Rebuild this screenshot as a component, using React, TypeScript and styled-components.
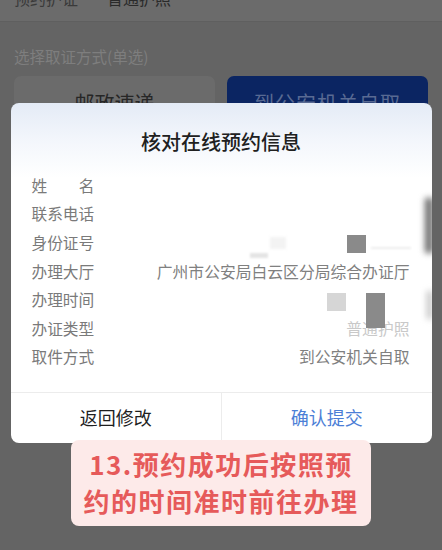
import React from "react";
import styled, { createGlobalStyle } from "styled-components";

const Global = createGlobalStyle`
  html, body { margin: 0; padding: 0; }
  body {
    width: 442px;
    height: 550px;
    overflow: hidden;
    background: #646464;
    font-family: "Noto Sans CJK SC", "Noto Sans", sans-serif;
  }
`;

const Page = styled.div`
  position: relative;
  width: 442px;
  height: 550px;
  display: flex;
  flex-direction: column;
  background: #646464;
`;

const TopBar = styled.div`
  height: 22px;
  box-sizing: border-box;
  display: flex;
  align-items: flex-end;
  gap: 29px;
  padding: 0 14px 15px;
  background: #6b6b6b;
  border-bottom: 1px solid #5f5f5f;
  overflow: hidden;
`;

const TopText = styled.span<{ $strong?: boolean }>`
  font-size: 16px;
  line-height: 16px;
  color: ${(p) => (p.$strong ? "#2a2a2a" : "#3a3a3a")};
  white-space: nowrap;
`;

const SectionLabel = styled.div`
  margin: 23px 0 0 14px;
  font-size: 15.5px;
  line-height: 22px;
  color: #7e7e7e;
`;

const ChoiceRow = styled.div`
  display: grid;
  grid-template-columns: 1fr 1fr;
  gap: 12px;
  padding: 0 14px;
  margin-top: 9px;
`;

const Choice = styled.div<{ $active?: boolean }>`
  height: 56px;
  border-radius: 7px;
  background: ${(p) => (p.$active ? "#0b2562" : "#6b6b6b")};
  color: ${(p) => (p.$active ? "#596a93" : "#262626")};
  font-size: 20px;
  display: flex;
  align-items: center;
  justify-content: center;
  padding-bottom: 4px;
  box-sizing: border-box;
  letter-spacing: ${(p) => (p.$active ? "1px" : "0")};
`;

const ModalLayer = styled.div`
  position: absolute;
  inset: 0;
  display: flex;
  flex-direction: column;
  align-items: center;
  padding-top: 103px;
`;

const Dialog = styled.div`
  position: relative;
  width: 421px;
  height: 340px;
  border-radius: 8px;
  background: linear-gradient(180deg, #e4ebf6 0px, #f4f7fc 40px, #ffffff 75px);
  display: flex;
  flex-direction: column;
  overflow: hidden;
`;

const Title = styled.div`
  height: 68px;
  box-sizing: border-box;
  padding-top: 27px;
  text-align: center;
  font-size: 20px;
  line-height: 24px;
  font-weight: 500;
  color: #202020;
`;

const Rows = styled.div`
  display: flex;
  flex-direction: column;
  padding: 0 22px 0 21px;
  height: 221px;
  border-bottom: 1px solid #ececec;
`;

const Row = styled.div`
  height: 28.6px;
  display: flex;
  align-items: center;
  justify-content: space-between;
`;

const Label = styled.div`
  width: 63px;
  display: flex;
  justify-content: space-between;
  font-size: 15.7px;
  color: #7a7a7a;
  white-space: nowrap;
`;

const Value = styled.div<{ $faint?: boolean }>`
  font-size: 15.8px;
  color: ${(p) => (p.$faint ? "#c9c9c9" : "#808080")};
  white-space: nowrap;
  text-align: right;
`;

const Footer = styled.div`
  flex: 1;
  display: grid;
  grid-template-columns: 1fr 1fr;
`;

const FootButton = styled.div<{ $primary?: boolean }>`
  display: flex;
  align-items: center;
  justify-content: center;
  padding-bottom: 2px;
  font-size: 18px;
  color: ${(p) => (p.$primary ? "#4c7ed6" : "#1f1f1f")};
  & + & {
    border-left: 1px solid #ececec;
  }
`;

const Blot = styled.div<{ $shade: string; $blur?: number }>`
  position: absolute;
  background: ${(p) => p.$shade};
  filter: blur(${(p) => p.$blur ?? 0.6}px);
`;

const Caption = styled.div`
  position: relative;
  z-index: 2;
  margin-top: -3px;
  width: 300px;
  box-sizing: border-box;
  padding: 5px 0 7px;
  border-radius: 8px;
  background: #fdeae9;
  color: #e65a5a;
  font-size: 26px;
  font-weight: 700;
  line-height: 37px;
  letter-spacing: 1.5px;
  text-align: center;
`;

const rows: { label: string[]; value?: string; faint?: boolean }[] = [
  { label: ["姓", "名"] },
  { label: ["联系电话"] },
  { label: ["身份证号"] },
  { label: ["办理大厅"], value: "广州市公安局白云区分局综合办证厅" },
  { label: ["办理时间"] },
  { label: ["办证类型"], value: "普通护照", faint: true },
  { label: ["取件方式"], value: "到公安机关自取" },
];

export default function App() {
  return (
    <Page>
      <Global />
      <TopBar>
        <TopText>预约护证</TopText>
        <TopText $strong>普通护照</TopText>
      </TopBar>
      <SectionLabel>选择取证方式(单选)</SectionLabel>
      <ChoiceRow>
        <Choice>邮政速递</Choice>
        <Choice $active>到公安机关自取</Choice>
      </ChoiceRow>

      <ModalLayer>
        <Dialog>
          <Title>核对在线预约信息</Title>
          <Rows>
            {rows.map((r) => (
              <Row key={r.label.join("")}>
                <Label>
                  {r.label.map((t) => (
                    <span key={t}>{t}</span>
                  ))}
                </Label>
                {r.value && <Value $faint={r.faint}>{r.value}</Value>}
              </Row>
            ))}
          </Rows>
          <Footer>
            <FootButton>返回修改</FootButton>
            <FootButton $primary>确认提交</FootButton>
          </Footer>

          <Blot $shade="#e4e4e4" $blur={1.2} style={{ left: 239, top: 150, width: 18, height: 5 }} />
          <Blot $shade="#f3f3f3" $blur={1.5} style={{ left: 259, top: 134, width: 16, height: 12 }} />
          <Blot $shade="#8a8a8a" style={{ left: 336, top: 132, width: 19, height: 18 }} />
          <Blot $shade="#ededed" $blur={0.8} style={{ left: 360, top: 144, width: 40, height: 2 }} />
          <Blot $shade="#d6d6d6" style={{ left: 316, top: 190, width: 19, height: 18 }} />
          <Blot $shade="#8a8a8a" style={{ left: 355, top: 190, width: 19, height: 35 }} />
          <Blot $shade="#6a6a6a" $blur={3} style={{ left: 414, top: 95, width: 8, height: 55 }} />
          <Blot $shade="#bdbdbd" $blur={3} style={{ left: 416, top: 188, width: 5, height: 28 }} />
        </Dialog>
        <Caption>
          <div>13.预约成功后按照预</div>
          <div>约的时间准时前往办理</div>
        </Caption>
      </ModalLayer>
    </Page>
  );
}
